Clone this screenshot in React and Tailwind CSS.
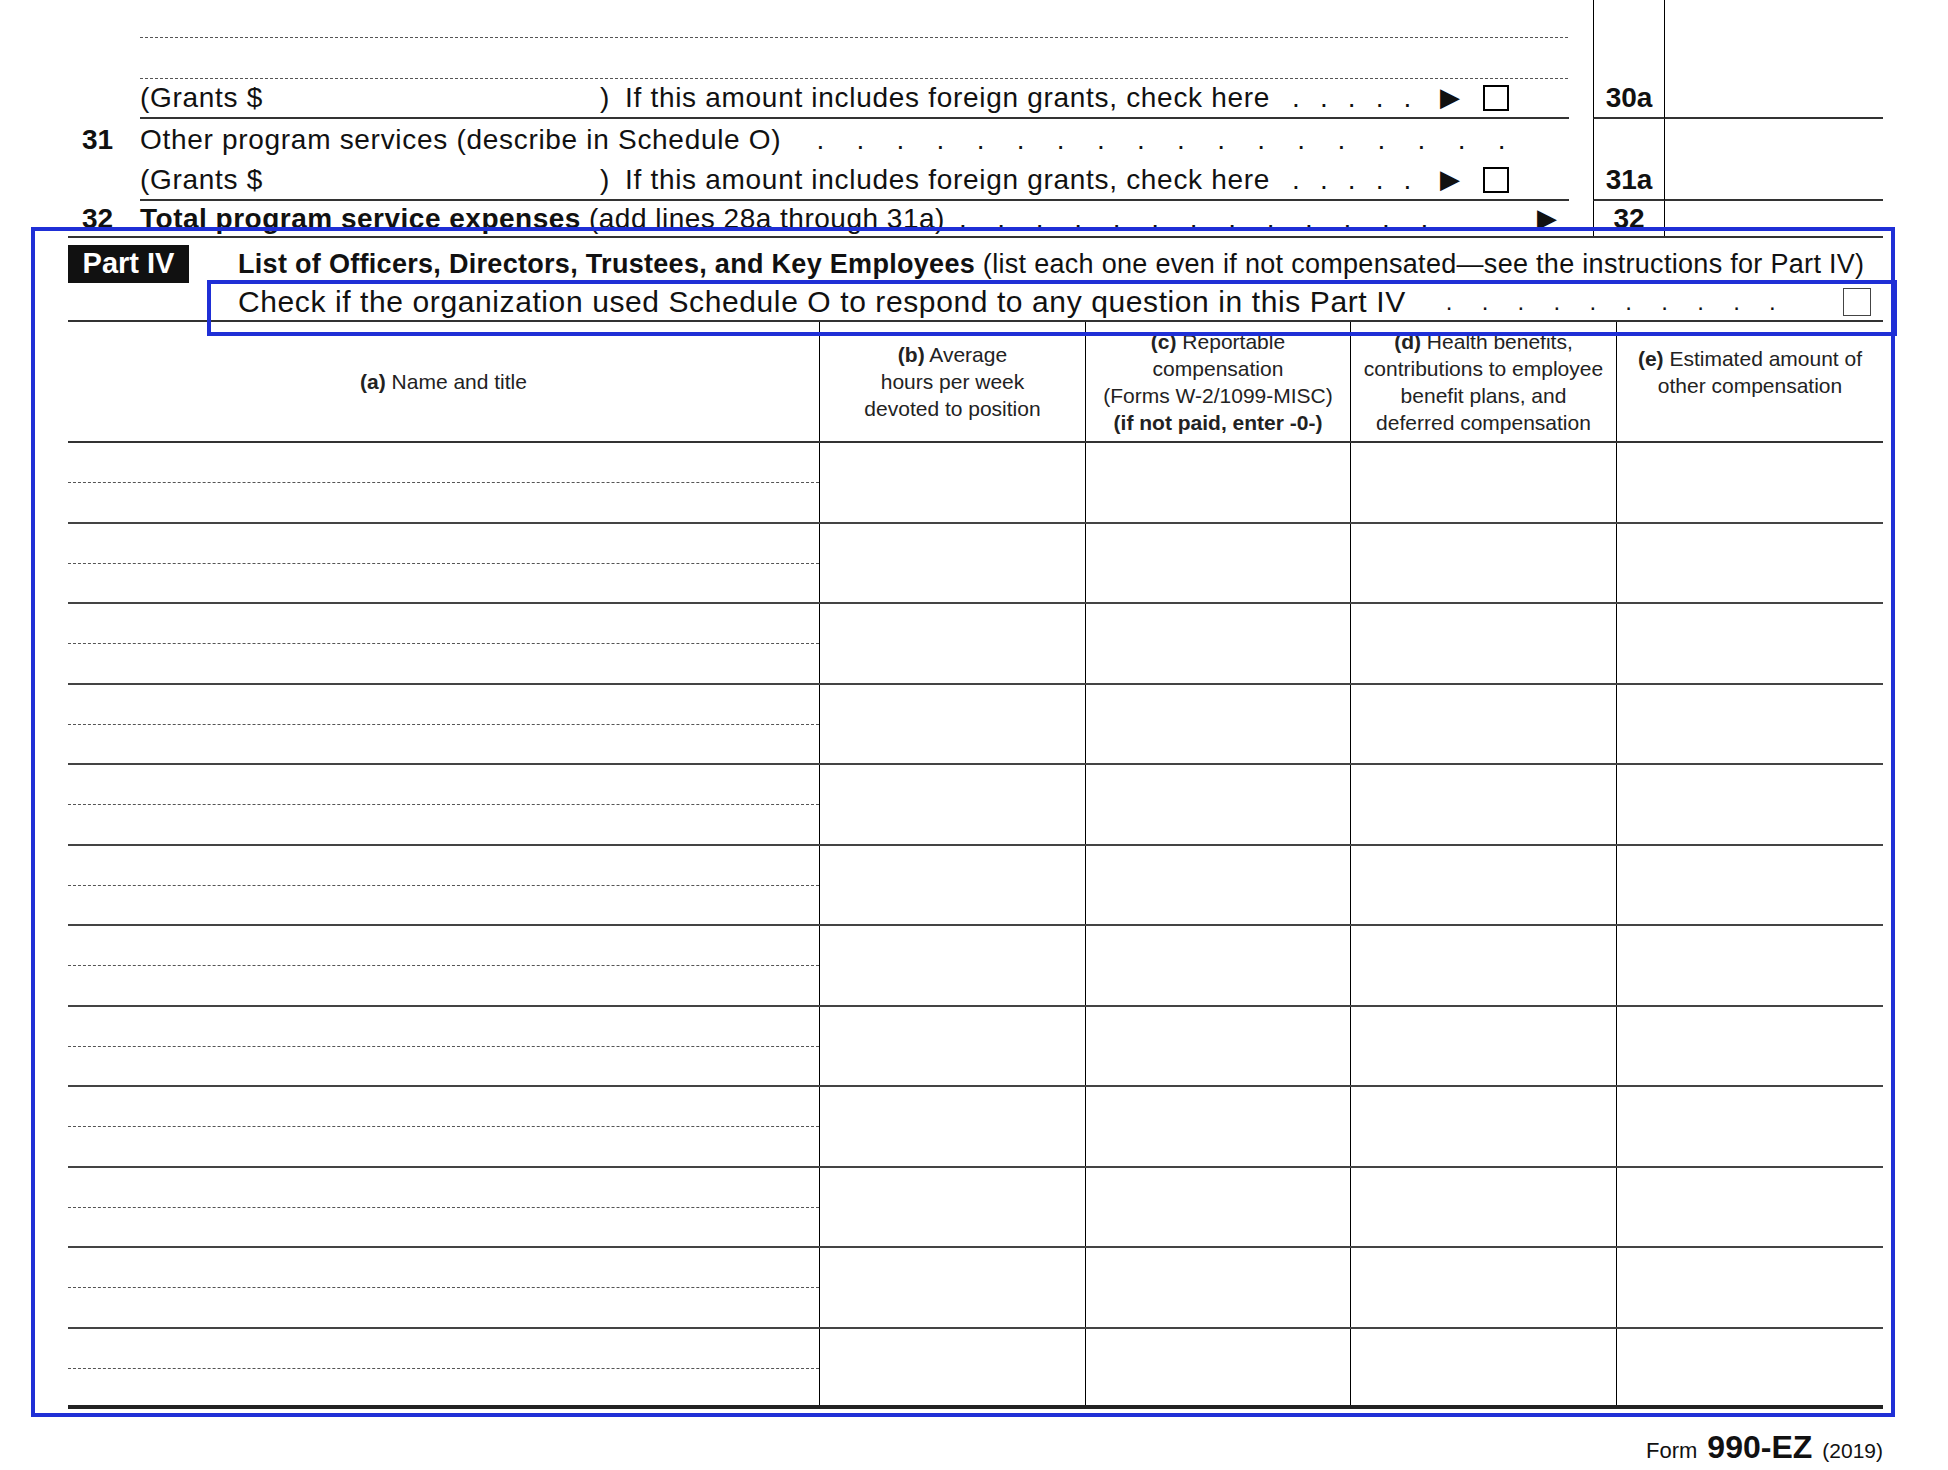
const F = { fontFamily: '"Liberation Sans", Arial, sans-serif' };

function Dots({ n, cls = "" }) {
  return (
    <span className={"flex justify-between " + cls}>
      {Array.from({ length: n }).map((_, i) => (
        <span key={i}>.</span>
      ))}
    </span>
  );
}

function GrantsRow({ label }) {
  return (
    <div className="flex h-[41px] items-center">
      <div className="w-[72px]" />
      <div className="flex-1 flex items-center h-full border-b-2 border-[#333] text-[28px] tracking-[0.7px]">
        <span className="w-[460px]">(Grants $</span>
        <span className="w-[25px]">)</span>
        <span>If this amount includes foreign grants, check here</span>
        <Dots n={5} cls="w-[120px] ml-[22px]" />
        <span className="ml-[28px] text-[26px]">▶</span>
        <span className="ml-[22px] inline-block w-[26px] h-[26px] border-2 border-black" />
      </div>
      <div className="ml-[24px] w-[72px] h-full border-l border-r border-black border-b-2 border-b-[#333] flex items-center justify-center font-bold text-[28px]">
        {label}
      </div>
      <div className="w-[218px] h-full border-b-2 border-[#333]" />
    </div>
  );
}

export default function App() {
  const rows = Array.from({ length: 12 });
  return (
    <div style={F} className="relative w-[1948px] h-[1470px] bg-white text-[#111] overflow-hidden">
      <div className="pl-[68px] w-[1883px]">
        <div className="flex h-[78px]">
          <div className="w-[72px]" />
          <div className="flex-1 flex flex-col pr-[25px]">
            <div className="mt-[37px] border-b border-dashed border-[#555]" />
            <div className="mt-[40px] border-b border-dashed border-[#555]" />
          </div>
          <div className="w-[72px] border-l border-r border-black" />
          <div className="w-[218px]" />
        </div>
        <GrantsRow label="30a" />
        <div className="flex h-[41px] items-center">
          <div className="w-[72px] font-bold text-[28px] pl-[14px]">31</div>
          <div className="flex-1 flex items-center text-[28px] tracking-[0.7px]">
            <span>Other program services (describe in Schedule O)</span>
            <Dots n={18} cls="w-[690px] ml-[35px]" />
          </div>
          <div className="w-[72px] h-full border-l border-r border-black" />
          <div className="w-[218px]" />
        </div>
        <GrantsRow label="31a" />
        <div className="flex h-[37px] items-center border-b-2 border-[#333]">
          <div className="w-[72px] font-bold text-[28px] pl-[14px]">32</div>
          <div className="flex-1 flex items-center text-[28px] tracking-[0.5px]">
            <span className="font-bold">Total program service expenses</span>
            <span className="ml-[8px]">(add lines 28a through 31a)</span>
            <Dots n={13} cls="w-[470px] ml-[14px]" />
            <span className="ml-auto mr-[36px] text-[26px]">▶</span>
          </div>
          <div className="w-[72px] h-full border-l border-r border-black flex items-center justify-center font-bold text-[28px]">32</div>
          <div className="w-[218px]" />
        </div>

        <div className="flex items-center mt-[7px] h-[38px]">
          <div className="w-[121px] h-[38px] bg-[#111] text-white font-bold text-[29px] flex items-center justify-center">Part IV</div>
          <div className="ml-[49px] text-[27px] whitespace-nowrap tracking-[0.3px]">
            <span className="font-bold">List of Officers, Directors, Trustees, and Key Employees</span> (list each one even if not compensated—see the instructions for Part IV)
          </div>
        </div>
        <div className="flex items-center h-[39px] border-b-2 border-[#333]">
          <span className="ml-[170px] text-[30px] tracking-[0.6px]">Check if the organization used Schedule O to respond to any question in this Part IV</span>
          <Dots n={10} cls="w-[330px] ml-[40px] text-[24px]" />
          <span className="ml-auto mr-[12px] w-[28px] h-[28px] border border-[#444]" />
        </div>

        <div className="flex h-[121px] border-b-2 border-[#333] text-[21px] leading-[27px] text-center text-[#222]">
          <div className="w-[751px] flex items-center justify-center"><span><b>(a)</b> Name and title</span></div>
          <div className="w-[266px] border-l border-black flex items-center justify-center"><span><b>(b)</b> Average<br />hours per week<br />devoted to position</span></div>
          <div className="w-[265px] border-l border-black flex items-center justify-center"><span><b>(c)</b> Reportable<br />compensation<br />(Forms W-2/1099-MISC)<br /><b>(if not paid, enter -0-)</b></span></div>
          <div className="w-[266px] border-l border-black flex items-center justify-center"><span><b>(d)</b> Health benefits,<br />contributions to employee<br />benefit plans, and<br />deferred compensation</span></div>
          <div className="w-[267px] border-l border-black flex items-start justify-center pt-[23px]"><span><b>(e)</b> Estimated amount of<br />other compensation</span></div>
        </div>
        {rows.map((_, i) => (
          <div key={i} className={"flex h-[80.5px] " + (i === 11 ? "border-b-4 border-[#222]" : "border-b-2 border-[#444]")}>
            <div className="w-[751px] pt-[39px]"><div className="border-b border-dashed border-[#555]" /></div>
            <div className="w-[266px] border-l border-black" />
            <div className="w-[265px] border-l border-black" />
            <div className="w-[266px] border-l border-black" />
            <div className="w-[267px] border-l border-black" />
          </div>
        ))}
        <div className="flex justify-end items-baseline mt-[14px] gap-[10px]">
          <span className="text-[22px]">Form</span>
          <span className="text-[32px] font-bold">990-EZ</span>
          <span className="text-[21px]">(2019)</span>
        </div>
      </div>

      <div className="absolute left-[31px] top-[227px] w-[1864px] h-[1190px] border-4 border-[#1f2fd6] pointer-events-none" />
      <div className="absolute left-[207px] top-[280px] w-[1690px] h-[56px] border-4 border-[#1f2fd6] pointer-events-none" />
    </div>
  );
}
